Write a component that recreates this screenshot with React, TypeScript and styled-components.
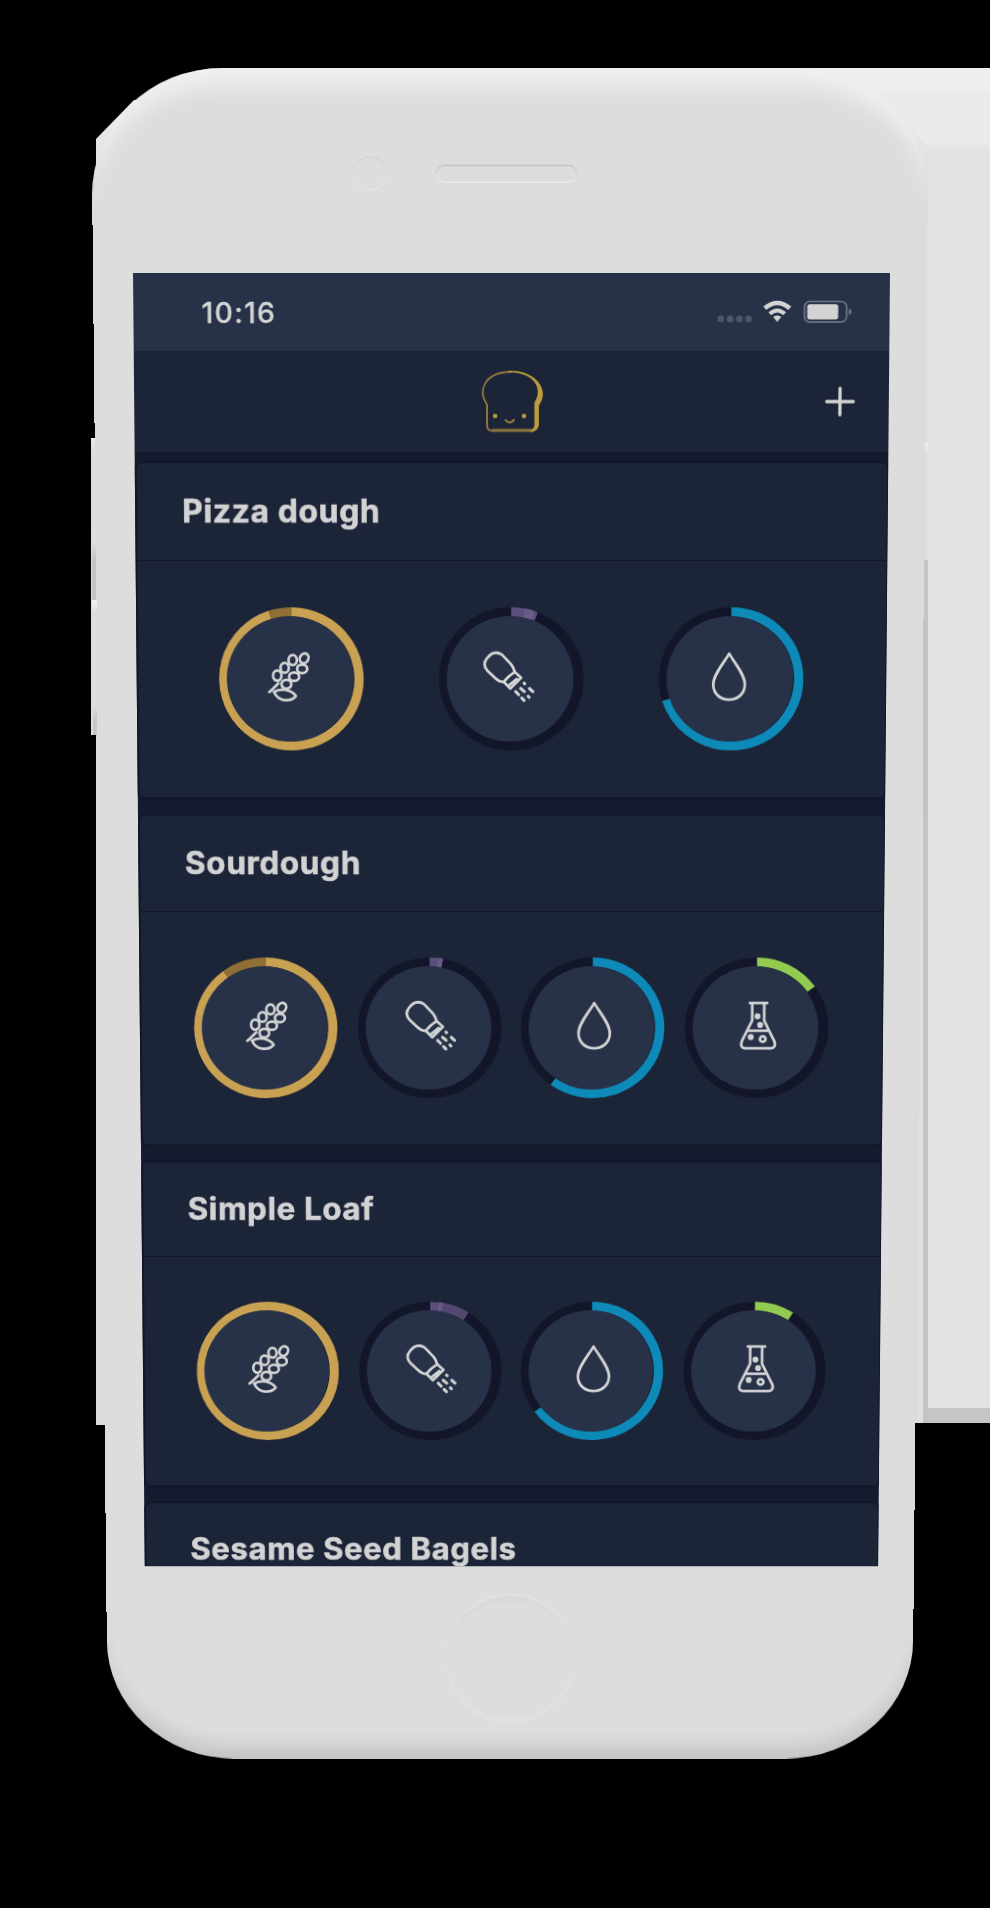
import React from "react";
import styled, { createGlobalStyle } from "styled-components";

const GlobalStyle = createGlobalStyle`
  *, *::before, *::after { box-sizing: border-box; }
  body { margin: 0; background: #000; }
`;

const ink = "#d3d3d3";

const Stage = styled.main`
  position: relative;
  width: 990px;
  height: 1908px;
  overflow: hidden;
  background: #000;
  font-family: Inter, "Liberation Sans", sans-serif;
  color: ${ink};
`;

/* Parts of the device seen behind and beside its face */
const Slab = styled.div`
  position: absolute;
  left: 780px;
  top: 68px;
  width: 210px;
  height: 1355px;
  background: linear-gradient(#efefef 0 20px, #eaeaea 27px 75px, #e2e2e2 83px 1340px, #c5c5c5 1340px);
`;

const LeftEdge = styled.div`
  position: absolute;
  left: 96px;
  top: 100px;
  width: 60px;
  height: 1325px;
  background: linear-gradient(#eaeaea, #e6e6e6 40px, #dddddd 95px);
  clip-path: polygon(38px 0, 100% 0, 100% 100%, 0 100%, 0 39px);
`;

const RightEdge = styled.div`
  position: absolute;
  left: 898px;
  top: 116px;
  width: 29px;
  height: 1307px;
  background: linear-gradient(#e9e9e9, #e4e4e4 30px, #dcdcdc 80px);
  clip-path: polygon(0 0, 100% 30px, 100% 100%, 0 100%);
`;

const SideButton = styled.div<{ $x: number; $y: number; $w: number; $h: number; $tone: string }>`
  position: absolute;
  left: ${(p) => p.$x}px;
  top: ${(p) => p.$y}px;
  width: ${(p) => p.$w}px;
  height: ${(p) => p.$h}px;
  background: ${(p) => p.$tone};
`;

/* The device leans back: everything narrows towards its lower end */
const Phone = styled.div`
  position: relative;
  display: flex;
  flex-direction: column;
  align-items: center;
  width: 834px;
  height: 1745px;
  margin: 69px 0 0 92.5px;
  border-radius: 131px / 126px;
  background: #dddddd;
  box-shadow:
    inset 0 28px 20px -10px rgba(255, 255, 255, 0.55),
    inset 0 -22px 20px -10px rgba(0, 0, 0, 0.12);
  transform-origin: 50% 204px;
  transform: matrix3d(1, 0, 0, 0, 0, 1, 0, 0.0000242, 0, 0, 1, 0, 0, 0, 0, 1);
`;

const Forehead = styled.div`
  display: flex;
  align-items: center;
  flex: 0 0 204px;
  width: 100%;
  padding: 6px 0 0 259.5px;
  gap: 49px;
`;

const Camera = styled.div`
  width: 34px;
  height: 34px;
  border-radius: 50%;
  box-shadow: inset 0 1px 1px rgba(0, 0, 0, 0.07), inset 0 -1px 1px rgba(255, 255, 255, 0.35);
`;

const Speaker = styled.div`
  width: 141px;
  height: 18px;
  border-radius: 9px;
  box-shadow: inset 0 1px 1px rgba(0, 0, 0, 0.16), inset 0 -1px 1px rgba(255, 255, 255, 0.6);
`;

const Screen = styled.div`
  flex: 0 0 1335px;
  width: 756.5px;
  margin-left: 3px;
  overflow: hidden;
  background: #151b2e;
`;

const Chin = styled.div`
  flex: 1;
  padding-top: 30px;
`;

const HomeButton = styled.div`
  width: 135px;
  height: 141px;
  border-radius: 50%;
  box-shadow: inset 0 1px 1px rgba(255, 255, 255, 0.4), inset 0 10px 2px -1px rgba(0, 0, 0, 0.012),
    inset 0 -1px 1px rgba(0, 0, 0, 0.03), inset 0 -10px 2px -1px rgba(255, 255, 255, 0.1);
`;

const StatusBar = styled.div`
  display: flex;
  align-items: center;
  justify-content: space-between;
  height: 78px;
  padding: 0 36.5px 0 68px;
  background: #273249;
`;

const Clock = styled.span`
  font-size: 28.5px;
  font-weight: 550;
  line-height: 34px;
  letter-spacing: 1.2px;
  padding-top: 1px;
  -webkit-text-stroke: 0.3px ${ink};
`;

const NavBar = styled.header`
  display: grid;
  grid-template-columns: 1fr 64px 1fr;
  align-items: center;
  height: 102px;
  padding: 0 34px;
  background: #1c2438;
`;

const AddButton = styled.button`
  display: flex;
  justify-self: end;
  padding: 0;
  border: 0;
  background: none;
  color: ${ink};
`;

const Feed = styled.div`
  display: flex;
  flex-direction: column;
  gap: 19px;
  padding: 9.5px 1px 0 2px;
  border-top: 1px solid #13182a;
`;

const Card = styled.section`
  flex: none;
  height: 340px;
  border-radius: 5px;
  background: #1c2438;
  box-shadow: 0 0 0 2px #121628, 0 10.5px 0 0 #151b2e, 0 11px 0 0 #13182a;
`;

const CardTitle = styled.h2`
  display: flex;
  align-items: center;
  height: 99px;
  margin: 0;
  padding: 1.5px 0 0 45px;
  border-bottom: 1.5px solid #141a2d;
  font-size: 32px;
  font-weight: 700;
  line-height: 40px;
  letter-spacing: 0.66px;
  -webkit-text-stroke: 0.6px ${ink};
`;

const Gauges = styled.div`
  display: flex;
  align-items: center;
  justify-content: space-around;
  height: 241px;
  padding: 0 44px 0 42.5px;
`;

const GaugeSvg = styled.svg`
  display: block;
  width: 146.5px;
  height: 146px;
  overflow: visible;
`;

type Kind = "flour" | "salt" | "water" | "starter";
type Arc = { from: number; to: number; color: string };
type Gauge = { kind: Kind; arcs: Arc[] };
type Recipe = { name: string; gauges: Gauge[] };

const colors = {
  flour: "#c8a153",
  flourDark: "#8f6f35",
  salt: "#5b4f7d",
  saltLight: "#695d88",
  water: "#0e8ab8",
  starter: "#92cb50",
};

const flour = (share: number): Gauge => ({
  kind: "flour",
  arcs: [
    { from: 0, to: share, color: colors.flour },
    { from: share, to: 100, color: colors.flourDark },
  ],
});
const salt = (arcs: Arc[]): Gauge => ({ kind: "salt", arcs });
const water = (share: number): Gauge => ({ kind: "water", arcs: [{ from: 0, to: share, color: colors.water }] });
const starter = (share: number): Gauge => ({
  kind: "starter",
  arcs: [{ from: 0, to: share, color: colors.starter }],
});

const recipes: Recipe[] = [
  {
    name: "Pizza dough",
    gauges: [
      flour(95),
      salt([
        { from: 0, to: 6, color: colors.salt },
        { from: 3, to: 5.2, color: colors.saltLight },
      ]),
      water(70),
    ],
  },
  {
    name: "Sourdough",
    gauges: [
      flour(90),
      salt([
        { from: 0, to: 3, color: colors.salt },
        { from: 2, to: 3, color: colors.saltLight },
      ]),
      water(60),
      starter(15),
    ],
  },
  {
    name: "Simple Loaf",
    gauges: [
      flour(100),
      salt([
        { from: 0, to: 9, color: colors.salt },
        { from: 3, to: 9, color: "#54486f" },
        { from: 2, to: 2.8, color: colors.saltLight },
      ]),
      water(65),
      starter(9),
    ],
  },
  { name: "Sesame Seed Bagels", gauges: [] },
];

const glyphs: Record<Kind, React.ReactNode> = {
  flour: (
    <>
      <ellipse cx="44" cy="-55" rx="12.5" ry="15" transform="rotate(30 44 -55)" />
      <ellipse cx="10" cy="-50" rx="12.5" ry="15" />
      <ellipse cx="-14" cy="-27" rx="12.5" ry="14.5" />
      <ellipse cx="-36" cy="-4" rx="12.5" ry="15" />
      <ellipse cx="38" cy="-24" rx="15" ry="12.5" />
      <ellipse cx="14" cy="-1" rx="15" ry="12.5" />
      <ellipse cx="-9" cy="21" rx="14.5" ry="13" />
      <path d="M-46 44C-31 34 0 32 19 56C4 75-34 73-46 44ZM-58 43L-33 19M-60 44L-54 39" />
    </>
  ),
  salt: (
    <>
      <path d="M-66-55C-54-71-38-76-22-66L5-38C13-28 14-22 16-15C3-7-7 2-17 15C-27 14-36 9-42 3L-65-19C-76-31-75-44-66-55Z" />
      <path d="M16-15L35 2L3 34L-15 15M22 6L-3 26" />
      <path d="M44 18L46 20M60 34L70 43M34 34L45 43M19 43L28 52M56 57L59 60M37 62L44 69" strokeWidth="9" />
    </>
  ),
  water: <path d="M0-69C-13-45-47-8-47 22C-47 51-24 67 0 67S47 51 47 22C47-8 13-45 0-69Z" />,
  starter: (
    <>
      <path d="M-25-69H27M-18-69V-16L-48 44C-55 62-46 67-38 67H37C48 67 56 58 47 42L18-16V-69M-33 14H33" />
      <circle cx="-2" cy="-29" r="5" fill={ink} />
      <circle cx="6" cy="-3" r="5" fill={ink} />
      <circle cx="-22" cy="33" r="5" fill={ink} />
      <circle cx="14" cy="39" r="8.5" />
    </>
  ),
};

const RADIUS = 68.3;

function arcPath({ from, to }: Arc) {
  const end = Math.min(to, from + 99.99);
  const at = (share: number) => {
    const a = (share / 100) * Math.PI * 2;
    return `${73 + RADIUS * Math.sin(a)} ${73 - RADIUS * Math.cos(a)}`;
  };
  return `M${at(from)}A${RADIUS} ${RADIUS} 0 ${end - from > 50 ? 1 : 0} 1 ${at(end)}`;
}

function GaugeRing({ gauge, shift }: { gauge: Gauge; shift: number }) {
  return (
    <GaugeSvg viewBox="0 0 146 146" fill="none">
      <circle cx="73" cy="73" r="73" fill="#121628" />
      {gauge.arcs
        .filter((a) => a.to > a.from)
        .map((a, i) => (
          <path key={i} d={arcPath(a)} stroke={a.color} strokeWidth="9.4" />
        ))}
      <circle cx="71.8" cy="73" r="64" fill="#273249" />
      <g
        transform={`translate(${73 + shift} 71) scale(0.34 0.346)`}
        stroke={ink}
        strokeWidth="8"
        strokeLinecap="round"
        strokeLinejoin="round"
      >
        {glyphs[gauge.kind]}
      </g>
    </GaugeSvg>
  );
}

const StatusIcons = () => (
  <svg width="136" height="24" viewBox="0 0 136 24" fill="none">
    {[4, 13.3, 22.6, 31.8].map((x) => (
      <circle key={x} cx={x} cy="19" r="3.4" fill="#4d566a" />
    ))}
    <path d="M48 8.3Q60.500-2.300 73 8.300" stroke={ink} strokeWidth="4.400" />
    <path d="M53 13.800Q60.500 7.200 68 13.800" stroke={ink} strokeWidth="4" />
    <path d="M60.500 15.500Q63 15.500 64.500 17L60.500 22L56.500 17Q58 15.500 60.500 15.500Z" fill={ink} />
    <rect x="87.700" y="1.500" width="42.200" height="20.600" rx="5.500" stroke="#6d7486" strokeWidth="1.700" />
    <rect x="90.500" y="4.200" width="31" height="15.400" rx="2.500" fill={ink} />
    <path d="M132 8.500Q135 9.500 135 11.800Q135 14 132 15Z" fill="#6d7486" />
  </svg>
);

const BreadLogo = () => (
  <svg width="64" height="64" viewBox="0 0 64 64" fill="none" stroke="#bd9c3d">
    <path d="M7 35C-3 20 5 2 32 2" stroke="#8c773e" strokeWidth="1.800" />
    <path d="M7 35V56Q7 61.500 13 61.500" stroke="#8c773e" strokeWidth="2" />
    <path d="M12 61H53" stroke="#8c773e" strokeWidth="2.800" />
    <path
      d="M28 1C50-.5 63.500 13 63 25C62.500 31 60.500 33 59 36V56Q57.500 62.500 50 62.700Q54 59 54.500 56V35Q54 33 56 30C63 15 50 2 28 2.500Z"
      fill="#bd9c3d"
      stroke="none"
    />
    <circle cx="15" cy="46.500" r="2.300" fill="#bd9c3d" stroke="none" />
    <circle cx="44" cy="46.500" r="2.300" fill="#bd9c3d" stroke="none" />
    <path d="M25 50Q29.500 56 34.500 50" stroke="#9b833e" strokeWidth="2" />
  </svg>
);

export default function App() {
  return (
    <>
      <GlobalStyle />
      <Stage>
        <Slab />
        <LeftEdge />
        <RightEdge />
        <SideButton $x={923} $y={560} $w={5} $h={863} $tone="#c4c4c4" />
        <SideButton $x={918} $y={560} $w={5} $h={863} $tone="#dfdfdf" />
        <SideButton $x={91} $y={438} $w={12} $h={297} $tone="linear-gradient(#ececec, #dddddd 12px)" />
        <SideButton $x={924} $y={443} $w={4} $h={13} $tone="linear-gradient(#f0f0f0, #dedede)" />
        <Phone>
          <Forehead>
            <Camera />
            <Speaker />
          </Forehead>
          <Screen>
            <StatusBar>
              <Clock>10:16</Clock>
              <StatusIcons />
            </StatusBar>
            <NavBar>
              <span />
              <BreadLogo />
              <AddButton aria-label="Add">
                <svg width="30" height="30" viewBox="0 0 30 30">
                  <path d="M15 1.700V28.300M1.700 15H28.300" stroke={ink} strokeWidth="3.300" strokeLinecap="round" />
                </svg>
              </AddButton>
            </NavBar>
            <Feed>
              {recipes.map((recipe) => (
                <Card key={recipe.name}>
                  <CardTitle>{recipe.name}</CardTitle>
                  <Gauges>
                    {recipe.gauges.map((gauge) => (
                      <GaugeRing key={gauge.kind} gauge={gauge} shift={recipe.gauges.length === 3 ? -2 : 1.5} />
                    ))}
                  </Gauges>
                </Card>
              ))}
            </Feed>
          </Screen>
          <Chin>
            <HomeButton />
          </Chin>
        </Phone>
        <SideButton $x={92} $y={545} $w={4} $h={55} $tone="linear-gradient(#dadada, #c4c4c4 14px)" />
        <SideButton $x={92} $y={600} $w={5} $h={13} $tone="linear-gradient(#f2f2f2, #dddddd)" />
        <SideButton $x={93} $y={708} $w={4} $h={27} $tone="linear-gradient(#dadada, #c6c6c6 14px)" />
      </Stage>
    </>
  );
}
